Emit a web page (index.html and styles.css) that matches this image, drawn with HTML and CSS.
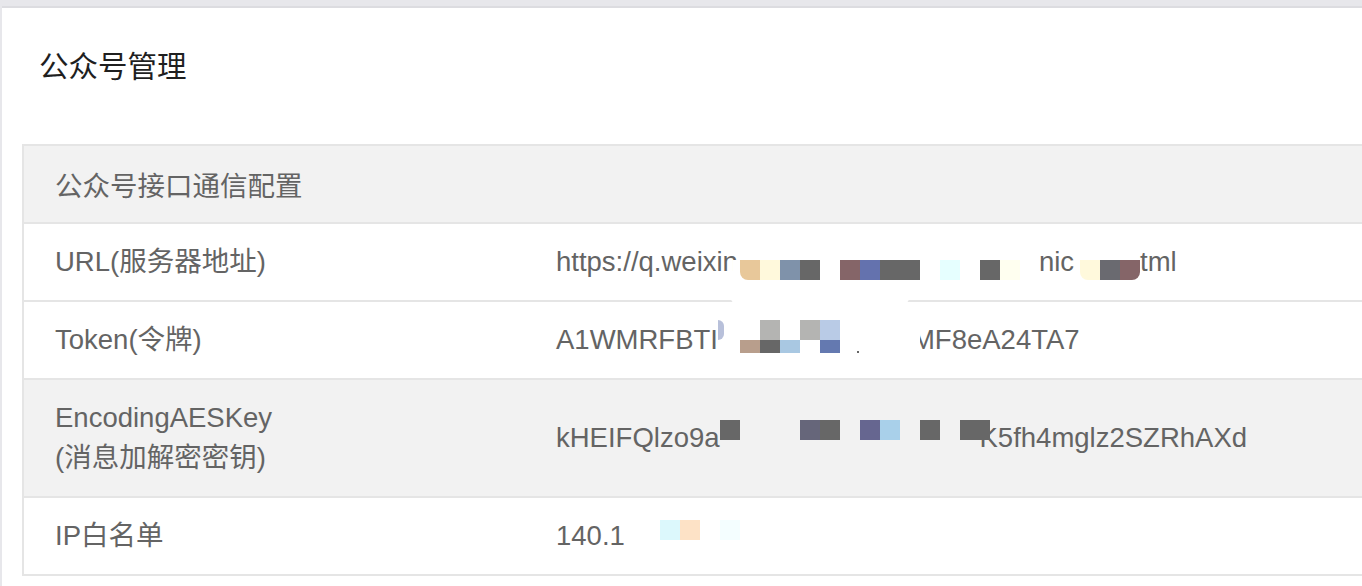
FILE: index.html
```html
<!DOCTYPE html>
<html lang="zh-CN">
<head>
<meta charset="utf-8">
<title>公众号管理</title>
<link rel="stylesheet" href="styles.css">
</head>
<body>
<div class="page">
  <section class="card">
    <h1 class="title">公众号管理</h1>
    <div class="config">
      <div class="config-head">公众号接口通信配置</div>
      <div class="row">
        <div class="label">URL(服务器地址)</div>
        <div class="value">https://q.weixin<span class="mosaic m-url1"><span class="grid g-url1"><i class="c-white"></i><i class="c-tan r-bl"></i><i class="c-cream"></i><i class="c-slate"></i><i class="c-gray"></i><i></i><i class="c-brown"></i><i class="c-blue"></i><i class="c-gray"></i><i class="c-gray"></i><i></i><i class="c-ice"></i><i></i><i class="c-gray"></i><i class="c-ivory"></i><i></i></span></span>nic<span class="mosaic"><span class="grid g-url2"><i></i><i class="c-cream r-bl"></i><i class="c-dusk"></i><i class="c-brown r-br"></i></span></span>tml<span class="blob"></span></div>
      </div>
      <div class="row">
        <div class="label">Token(令牌)</div>
        <div class="value">A1WMRFBTI<span class="mosaic m-token"><span class="grid g-token"><i class="c-lav r-r"></i><i></i><i></i><i class="c-silver"></i><i></i><i class="c-silver"></i><i class="c-pale"></i><i class="c-white"></i><i></i><i></i><i class="c-taupe"></i><i class="c-gray"></i><i class="c-sky"></i><i></i><i class="c-navy"></i><i class="c-white dot-cell"><b class="dot"></b></i></span></span>MF8eA24TA7</div>
      </div>
      <div class="row row-alt">
        <div class="label">EncodingAESKey<br>(消息加解密密钥)</div>
        <div class="value">kHEIFQlzo9a<span class="mosaic m-aes"><span class="grid g-aes"><i class="c-gray"></i><i></i><i></i><i></i><i class="c-ink"></i><i class="c-gray"></i><i></i><i class="c-indigo"></i><i class="c-aqua"></i><i></i><i class="c-gray"></i><i></i><i class="c-gray"></i></span></span>K5fh4mglz2SZRhAXd</div>
      </div>
      <div class="row">
        <div class="label">IP白名单</div>
        <div class="value">140.1<span class="mosaic m-ip"><span class="grid g-ip"><i></i><i class="c-mint"></i><i class="c-peach"></i><i></i><i class="c-frost"></i></span></span></div>
      </div>
    </div>
  </section>
</div>
</body>
</html>
```

FILE: styles.css
```css
html, body {
  margin: 0;
  padding: 0;
  height: 100%;
  overflow: hidden;
}

body {
  background: #e7e7eb;
  font-family: "Liberation Sans", "Noto Sans CJK SC", sans-serif;
}

.page {
  padding: 6px 0 0 2px;
  height: 100%;
  box-sizing: border-box;
}

.card {
  background: #ffffff;
  border-top: 2px solid #dcdce0;
  height: 100%;
  box-sizing: border-box;
  padding: 36px 0 0 20px;
  overflow: hidden;
}

.title {
  margin: 0 0 0 17px;
  font-family: "Noto Sans CJK SC", sans-serif;
  font-weight: 400;
  font-size: 29.5px;
  line-height: 40px;
  color: #1f1f1f;
}

.config {
  margin-top: 60px;
  margin-right: -60px;
  border: 2px solid #e5e5e5;
  color: #646464;
  font-size: 27.5px;
  line-height: 40px;
}

.config-head {
  background: #f2f2f2;
  padding: 18px 31px;
  font-family: "Noto Sans CJK SC", sans-serif;
  font-size: 27.5px;
}

.row {
  display: grid;
  grid-template-columns: 501px 1fr;
  border-top: 2px solid #e5e5e5;
  background: #ffffff;
}

.row-alt {
  background: #f2f2f2;
}

.label {
  padding: 18px 31px;
}

.value {
  position: relative;
  padding: 18px 31px;
  display: flex;
  align-items: center;
  white-space: nowrap;
}

.value > * {
  flex: none;
}

.mosaic {
  position: relative;
  z-index: 1;
  display: inline-block;
  overflow: hidden;
  align-self: flex-start;
  margin-top: 18px;
}

.grid {
  display: grid;
  grid-auto-flow: column;
  grid-template-rows: 20px;
}

.grid i {
  display: block;
}

.m-url1 {
  margin-left: -5px;
}

.g-url1 {
  grid-template-columns: 7px repeat(14, 20px) 19px;
}

.g-url2 {
  grid-template-columns: 6px repeat(3, 20px);
}

.m-token {
  margin-top: 0;
  margin-right: -8px;
}

.g-token {
  grid-auto-flow: row;
  grid-template-rows: 20px 13px;
  grid-template-columns: 6px 16px repeat(5, 20px) 80px;
}

.m-aes {
  align-self: center;
  margin-top: -16px;
  margin-right: -10px;
}

.g-aes {
  grid-template-columns: repeat(12, 20px) 30px;
}

.m-ip {
  margin-top: 4px;
}

.g-ip {
  grid-template-columns: 35px repeat(4, 20px);
}

.dot-cell {
  position: relative;
}

.dot {
  position: absolute;
  left: 17px;
  bottom: 0;
  width: 2px;
  height: 2px;
  background: #666666;
}

.blob {
  position: absolute;
  left: 205px;
  top: 64px;
  width: 180px;
  height: 16px;
  border-radius: 10px;
  background: #ffffff;
}

.r-bl { border-bottom-left-radius: 8px; }
.r-br { border-bottom-right-radius: 8px; }
.r-r { border-radius: 0 6px 6px 0; }

.c-white { background: #ffffff; }
.c-tan { background: #e8c89a; }
.c-cream { background: #fff9dc; }
.c-slate { background: #7f92aa; }
.c-gray { background: #676767; }
.c-brown { background: #856568; }
.c-blue { background: #6472ae; }
.c-ice { background: #e6ffff; }
.c-ivory { background: #fffff0; }
.c-dusk { background: #6a6a70; }
.c-silver { background: #b4b4b2; }
.c-pale { background: #b9cbe6; }
.c-taupe { background: #b89e8c; }
.c-sky { background: #a9c8e2; }
.c-navy { background: #6479b0; }
.c-lav { background: #b8c0da; }
.c-ink { background: #66667a; }
.c-indigo { background: #666690; }
.c-aqua { background: #a9d0ea; }
.c-mint { background: #dcf8fc; }
.c-peach { background: #fde2c6; }
.c-frost { background: #f4feff; }
```
